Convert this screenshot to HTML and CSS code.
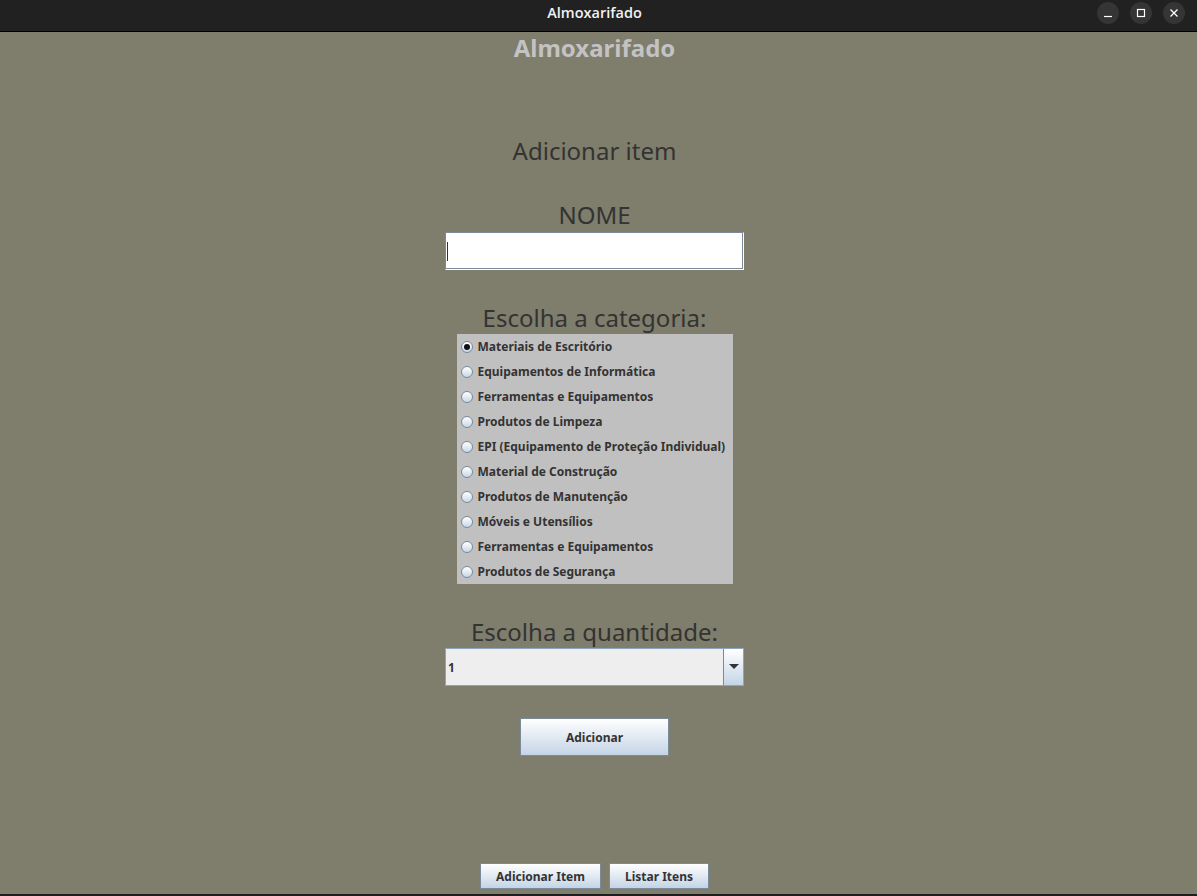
FILE: index.html
```html
<!DOCTYPE html>
<html lang="pt">
<head>
<meta charset="utf-8">
<title>Almoxarifado</title>
<link rel="stylesheet" href="styles.css">
</head>
<body>
<div class="window">
  <header class="titlebar">
    <span class="title">Almoxarifado</span>
    <div class="controls">
      <span class="ctl"><svg width="10" height="10" viewBox="0 0 10 10"><path d="M1 8.5H9" stroke="#fff" stroke-width="1.2"/></svg></span>
      <span class="ctl"><svg width="10" height="10" viewBox="0 0 10 10"><rect x="1.5" y="1.5" width="7" height="7" fill="none" stroke="#fff" stroke-width="1.2"/></svg></span>
      <span class="ctl"><svg width="10" height="10" viewBox="0 0 10 10"><path d="M1.5 1.5L8.5 8.5M8.5 1.5L1.5 8.5" stroke="#fff" stroke-width="1.3"/></svg></span>
    </div>
  </header>
  <main class="content">
    <h1 class="app-title">Almoxarifado</h1>
    <section class="form">
      <h2 class="label first">Adicionar item</h2>
      <div class="label">NOME</div>
      <div class="textfield"><span class="caret"></span></div>
      <div class="label gap">Escolha a categoria:</div>
      <div class="radios">
        <label class="radio checked"><span class="dot"></span>Materiais de Escritório</label>
        <label class="radio"><span class="dot"></span>Equipamentos de Informática</label>
        <label class="radio"><span class="dot"></span>Ferramentas e Equipamentos</label>
        <label class="radio"><span class="dot"></span>Produtos de Limpeza</label>
        <label class="radio"><span class="dot"></span>EPI (Equipamento de Proteção Individual)</label>
        <label class="radio"><span class="dot"></span>Material de Construção</label>
        <label class="radio"><span class="dot"></span>Produtos de Manutenção</label>
        <label class="radio"><span class="dot"></span>Móveis e Utensílios</label>
        <label class="radio"><span class="dot"></span>Ferramentas e Equipamentos</label>
        <label class="radio"><span class="dot"></span>Produtos de Segurança</label>
      </div>
      <div class="label gap">Escolha a quantidade:</div>
      <div class="combo">
        <span class="combo-value">1</span>
        <span class="combo-arrow"><svg width="10" height="6" viewBox="0 0 10 6"><path d="M0 0H10L5 5Z" fill="#333"/></svg></span>
      </div>
      <button class="btn big">Adicionar</button>
    </section>
    <nav class="bottom">
      <button class="btn small w1">Adicionar Item</button>
      <button class="btn small w2">Listar Itens</button>
    </nav>
  </main>
  <div class="edge"></div>
</div>
</body>
</html>
```
FILE: styles.css
```css
* { box-sizing: border-box; }
html, body { margin: 0; padding: 0; }
body {
  width: 1197px;
  height: 896px;
  overflow: hidden;
  background: #7f7d6b;
  font-family: "Noto Sans", "DejaVu Sans", sans-serif;
}
.window {
  display: flex;
  flex-direction: column;
  height: 896px;
}
.titlebar {
  height: 32px;
  flex: none;
  background: #212121;
  border-bottom: 1px solid #000;
  display: flex;
  align-items: center;
  justify-content: center;
  padding-right: 8px;
  position: relative;
}
.title {
  color: #f2f2f2;
  font-family: "Open Sans", "Noto Sans", sans-serif;
  font-weight: 600;
  font-size: 14.5px;
  margin-top: -6px;
}
.controls {
  position: absolute;
  right: 12px;
  top: 2px;
  display: flex;
  gap: 11px;
}
.ctl {
  width: 22px;
  height: 22px;
  border-radius: 50%;
  background: #353535;
  display: flex;
  align-items: center;
  justify-content: center;
}
.content {
  flex: 1;
  display: flex;
  flex-direction: column;
  align-items: center;
  padding-right: 8px;
}
.app-title {
  margin: 0;
  height: 32px;
  line-height: 32px;
  font-size: 24px;
  font-weight: 700;
  color: #c3c3c3;
}
.form {
  display: flex;
  flex-direction: column;
  align-items: center;
}
.label {
  margin: 0;
  height: 32px;
  line-height: 32px;
  font-size: 24px;
  font-weight: 400;
  color: #333333;
  margin-top: 32px;
}
.label.first { margin-top: 71px; }
.textfield {
  margin-top: 1px;
  width: 299px;
  height: 38px;
  background: #fff;
  border: 1px solid #7a8a99;
  border-right-color: #fff;
  border-bottom-color: #fff;
  box-shadow: inset -1px -1px 0 #7a8a99;
  position: relative;
}
.caret {
  position: absolute;
  left: 1px;
  top: 9px;
  width: 1px;
  height: 19px;
  background: #333;
}
.radios {
  width: 276px;
  background: #c0c0c0;
  display: flex;
  flex-direction: column;
}
.radio {
  height: 25px;
  display: flex;
  align-items: center;
  padding-left: 4px;
  font-size: 12px;
  font-weight: 700;
  color: #333333;
  white-space: nowrap;
}
.dot {
  width: 12px;
  height: 12px;
  border-radius: 50%;
  border: 1px solid #7a8a99;
  background: linear-gradient(#ffffff, #c8d7e8);
  margin-right: 5px;
  flex: none;
  display: flex;
  align-items: center;
  justify-content: center;
}
.checked .dot::after {
  content: "";
  width: 6px;
  height: 6px;
  border-radius: 50%;
  background: #111;
}
.combo {
  width: 299px;
  height: 38px;
  background: #eeeeee;
  border: 1px solid #8fa4bd;
  display: flex;
}
.combo-value {
  flex: 1;
  padding-left: 2px;
  font-size: 12px;
  font-weight: 700;
  color: #333;
  display: flex;
  align-items: center;
}
.combo-arrow {
  width: 20px;
  border-left: 1px solid #7a8a99;
  background: linear-gradient(#ffffff, #c4d5e8);
  display: flex;
  align-items: center;
  justify-content: center;
}
.btn {
  font-family: "Noto Sans", "DejaVu Sans", sans-serif;
  font-size: 12px;
  font-weight: 700;
  color: #333333;
  border: 1px solid #7a8a99;
  background: linear-gradient(#ffffff, #c4d4e6);
  padding: 0;
  margin: 0;
}
.btn.big {
  margin-top: 32px;
  width: 149px;
  height: 38px;
}
.bottom {
  margin-top: auto;
  margin-bottom: 5px;
  display: flex;
  gap: 8px;
}
.btn.small { height: 26px; }
.w1 { width: 121px; }
.w2 { width: 100px; }
.edge {
  height: 2px;
  flex: none;
  background: #1e1e1e;
}
```
